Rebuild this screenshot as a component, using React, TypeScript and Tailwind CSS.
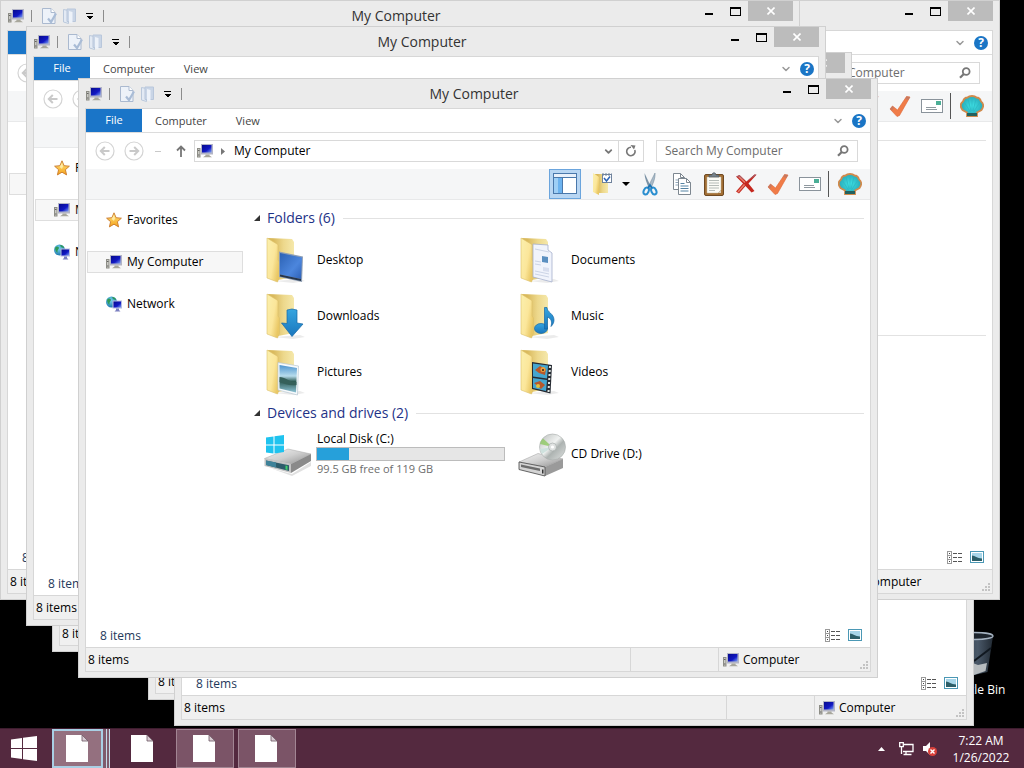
import type { ReactNode } from 'react';
import { ChevronDown } from 'lucide-react';

type IconProps = { className?: string };

function Gradients() {
  return (
    <svg width="0" height="0" className="absolute" aria-hidden="true">
      <defs>
        <linearGradient id="folderFront" x1="0" y1="0" x2="1" y2="0.6">
          <stop offset="0" stopColor="#fbf0ae" />
          <stop offset="0.6" stopColor="#fbe69a" />
          <stop offset="1" stopColor="#e9c764" />
        </linearGradient>
        <linearGradient id="folderBack" x1="0" y1="0" x2="1" y2="0">
          <stop offset="0.2" stopColor="#d9b95c" />
          <stop offset="0.6" stopColor="#edd88c" />
          <stop offset="1" stopColor="#f5e8ab" />
        </linearGradient>
        <linearGradient id="screen" x1="0" y1="0" x2="1" y2="1">
          <stop offset="0" stopColor="#070b8c" />
          <stop offset="0.6" stopColor="#1118c4" />
          <stop offset="1" stopColor="#7fa4f5" />
        </linearGradient>
        <linearGradient id="desktopBlue" x1="0" y1="0" x2="1" y2="1">
          <stop offset="0" stopColor="#2c62b4" />
          <stop offset="0.6" stopColor="#4c86dd" />
          <stop offset="1" stopColor="#2d60b6" />
        </linearGradient>
        <linearGradient id="arrowBlue" x1="0" y1="0" x2="0" y2="1">
          <stop offset="0" stopColor="#35a5e0" />
          <stop offset="1" stopColor="#1a76bd" />
        </linearGradient>
        <linearGradient id="photo" x1="0" y1="0" x2="0" y2="1">
          <stop offset="0" stopColor="#4b93cf" />
          <stop offset="0.4" stopColor="#b7dcec" />
          <stop offset="0.6" stopColor="#2f5c55" />
          <stop offset="1" stopColor="#8cc3d6" />
        </linearGradient>
        <linearGradient id="metal" x1="0" y1="0" x2="1" y2="1">
          <stop offset="0" stopColor="#f3f3f3" />
          <stop offset="0.5" stopColor="#cfcfcf" />
          <stop offset="1" stopColor="#8f8f8f" />
        </linearGradient>
        <linearGradient id="disc" x1="0" y1="0" x2="1" y2="1">
          <stop offset="0" stopColor="#b9bdbb" />
          <stop offset="0.45" stopColor="#f0f2f1" />
          <stop offset="0.6" stopColor="#adb3b1" />
          <stop offset="1" stopColor="#dfe2e1" />
        </linearGradient>
        <linearGradient id="star" x1="0" y1="0" x2="0" y2="1">
          <stop offset="0" stopColor="#ffe680" />
          <stop offset="1" stopColor="#f5a21b" />
        </linearGradient>
        <radialGradient id="globe" cx="0.4" cy="0.35" r="0.7">
          <stop offset="0" stopColor="#7ad6f2" />
          <stop offset="1" stopColor="#1470a8" />
        </radialGradient>
        <radialGradient id="shell" cx="0.5" cy="0.5" r="0.6">
          <stop offset="0" stopColor="#3fe3e6" />
          <stop offset="1" stopColor="#249fb0" />
        </radialGradient>
        <linearGradient id="glass" x1="0" y1="0" x2="1" y2="0">
          <stop offset="0" stopColor="#3a4654" />
          <stop offset="0.6" stopColor="#56677a" />
          <stop offset="1" stopColor="#28323d" />
        </linearGradient>
      </defs>
    </svg>
  );
}

function ComputerIcon({ className = 'size-4' }: IconProps) {
  return (
    <svg viewBox="0 0 16 16" className={`${className} shrink-0`} aria-hidden="true">
      <rect x="0.5" y="5.5" width="2.5" height="8.5" fill="#c9c9c4" stroke="#8d8d86" />
      <path d="M1.2 7.5h1.200M1.200 12h1.200" stroke="#4d4d4d" />
      <rect x="4" y="1" width="12" height="10.500" fill="#b3b5c6" />
      <rect x="5" y="2" width="9.500" height="7.500" fill="url(#screen)" />
      <path d="M8.500 11.500h4v1l2.500 1.800H6l2.500-1.800z" fill="#a8a79c" />
    </svg>
  );
}

function StarIcon() {
  return (
    <svg viewBox="0 0 16 16" className="size-4 shrink-0" aria-hidden="true">
      <path d="M8 .8l2.100 4.900 5.300.500-4 3.500 1.200 5.200L8 12.200l-4.600 2.700 1.200-5.200-4-3.500 5.300-.500z" fill="url(#star)" stroke="#c9792a" strokeWidth="0.9" />
      <path d="M8 3l1 3.500L8 9 5.500 7z" fill="#fff3b8" opacity="0.8" />
    </svg>
  );
}

function NetworkIcon() {
  return (
    <svg viewBox="0 0 16 16" className="size-4 shrink-0" aria-hidden="true">
      <circle cx="5.500" cy="6" r="5.500" fill="url(#globe)" />
      <path d="M1 4c2-3 4-1 4 0S3 6 3.500 8 1 7 1 4zM6 1c3 0 4 2 4 3L7 3z" fill="#2f9a57" />
      <rect x="6.500" y="4.500" width="9.500" height="8" fill="#b7bce0" />
      <rect x="7.500" y="5.500" width="7.500" height="6" fill="url(#screen)" />
      <path d="M10 12.500h3v1.500l1.500 1.500h-6L10 14z" fill="#7a7fc0" />
    </svg>
  );
}

function PropertiesIcon() {
  return (
    <svg viewBox="0 0 16 16" className="size-4 shrink-0" aria-hidden="true">
      <path d="M1.500.500h8.500l4 4v11H1.500z" fill="#edf2f9" stroke="#aab9cf" />
      <path d="M10 .500v4h4" fill="#fff" stroke="#aab9cf" />
      <path d="M7 10.500l3 3.500 5-8.500" fill="none" stroke="#a9bcd6" strokeWidth="2.200" />
    </svg>
  );
}

function NewFolderIcon() {
  return (
    <svg viewBox="0 0 16 16" className="size-4 shrink-0" aria-hidden="true">
      <path d="M1.500 1.500l5 1v13l-5-1.500z" fill="#e3eaf4" stroke="#bac8db" />
      <path d="M5 1h8.500v12.500H5z" fill="#c9d5e6" stroke="#b9c7db" />
      <path d="M7 3l3.500 1v11.500L7 14.500z" fill="#edf2f9" />
    </svg>
  );
}

function TinyCaret() {
  return (
    <svg viewBox="0 0 8 8" className="size-2" shapeRendering="crispEdges" aria-hidden="true">
      <path d="M1 1h7v1H1zM1 4h7L4.500 7.500z" fill="#000" />
    </svg>
  );
}

function HelpIcon() {
  return (
    <span className="flex size-[14px] items-center justify-center rounded-full bg-[#1a75c5] text-[12px] leading-[14px] font-bold text-white">?</span>
  );
}

function SearchIcon() {
  return (
    <svg viewBox="0 0 12 12" className="size-3" aria-hidden="true">
      <circle cx="7.200" cy="4.500" r="3.400" fill="none" stroke="#777" strokeWidth="1.800" />
      <path d="M4.800 7L1 10.800" stroke="#777" strokeWidth="2.200" />
    </svg>
  );
}

function NavArrow({ flip }: { flip?: boolean }) {
  return (
    <svg viewBox="0 0 20 20" className={flip ? 'size-5 -scale-x-100' : 'size-5'} aria-hidden="true">
      <circle cx="10" cy="10" r="9" fill="#fff" stroke="#d4d4d4" strokeWidth="1.200" />
      <path d="M14.500 10H6M9.800 6L5.800 10l4 4" fill="none" stroke="#c9c9c9" strokeWidth="2" />
    </svg>
  );
}

function PaneIcon() {
  return (
    <svg viewBox="0 0 24 22" className="h-[22px] w-6" aria-hidden="true">
      <rect x="0.500" y="0.500" width="23" height="20" fill="#fff" stroke="#4a78ab" />
      <path d="M1 1h22v3H1z" fill="#e8f0fa" />
      <path d="M0 4.500h24M9.500 5v16" stroke="#4a78ab" />
      <path d="M1 5h8v15H1z" fill="#6db3ef" />
      <path d="M1 5h4v15H1z" fill="#b5dbfa" opacity="0.7" />
    </svg>
  );
}

function FolderCheckIcon() {
  return (
    <svg viewBox="0 0 22 24" className="h-6 w-[22px]" aria-hidden="true">
      <path d="M4 2h13v19H6z" fill="url(#folderBack)" />
      <path d="M2 1l6 4v18l-6-3z" fill="url(#folderFront)" />
      <rect x="11.500" y="2.500" width="9" height="8" fill="#fff" stroke="#70839c" />
      <path d="M11 2.500h10" stroke="#70839c" strokeDasharray="2 1" strokeWidth="2" />
      <path d="M13 6l2.500 3L19 4.500" fill="none" stroke="#2c63b5" strokeWidth="1.500" />
    </svg>
  );
}

function ScissorsIcon() {
  return (
    <svg viewBox="0 0 16 24" className="h-6 w-4" aria-hidden="true">
      <path d="M2.500 1l7 15-2 1.500C5 12 2.500 6 2.500 1z" fill="#7b92a5" />
      <path d="M13 1L6 15l2.500 2C11 12 13.500 6 13 1z" fill="#a9bac8" stroke="#6c8496" strokeWidth="0.500" />
      <ellipse cx="4.200" cy="19" rx="2.400" ry="3.600" transform="rotate(25 4.200 19)" fill="none" stroke="#2b8fd0" strokeWidth="2" />
      <ellipse cx="11.800" cy="19" rx="2.400" ry="3.600" transform="rotate(-25 11.800 19)" fill="none" stroke="#2b8fd0" strokeWidth="2" />
      <path d="M6 16l2-3 2 3" fill="none" stroke="#1b73b3" strokeWidth="1.800" />
    </svg>
  );
}

function CopyIcon() {
  return (
    <svg viewBox="0 0 20 24" className="h-6 w-5" aria-hidden="true">
      <path d="M1.500 1.500h7l4 4v12h-11z" fill="#fff" stroke="#7d8790" />
      <path d="M8.500 1.500v4h4" fill="none" stroke="#7d8790" />
      <path d="M3.500 8h4M3.500 10.500h4M3.500 13h4" stroke="#8fa6ba" />
      <path d="M6.500 6.500h8l4 4v12h-12z" fill="#fff" stroke="#7d8790" />
      <path d="M14.500 6.500v4h4" fill="none" stroke="#7d8790" />
      <path d="M8.500 11.500h4M8.500 14h8M8.500 16.500h8M8.500 19h8" stroke="#5583a3" />
    </svg>
  );
}

function ClipboardIcon() {
  return (
    <svg viewBox="0 0 20 24" className="h-6 w-5" aria-hidden="true">
      <rect x="0.500" y="2.500" width="19" height="21" rx="1.500" fill="#a36f35" stroke="#6f4a22" />
      <path d="M3 5h14v13l-3 3H3z" fill="#fbfbf6" stroke="#c7bda6" strokeWidth="0.500" />
      <path d="M5 8.500h10M5 11h10M5 13.500h10M5 16h10M5 18.500h6" stroke="#b6bcb8" />
      <path d="M5 5V3h3c0-3 4-3 4 0h3v2z" fill="#77828a" stroke="#4d565d" strokeWidth="0.700" />
      <path d="M17 18v3h-3z" fill="#d8d0bc" />
    </svg>
  );
}

function DeleteIcon() {
  return (
    <svg viewBox="0 0 22 20" className="h-5 w-[22px]" aria-hidden="true">
      <path d="M1 2.500L4.500 1l7 6.500L19.500.500l2 .300-8 8.700 6 7.500-3 1.500-6-6.500L4 19.500 1 17.500 8 9.500z" fill="#c5281f" />
      <path d="M21.500.800L11.500 7.500 19.500.500zM1.500 2.500L4.500 1l5 5z" fill="#a8606a" />
      <path d="M3 18l6.500-7.500M4 3l6 5.500" stroke="#e8806f" strokeWidth="1.500" />
    </svg>
  );
}

function CheckIcon() {
  return (
    <svg viewBox="0 0 22 22" className="size-[22px]" aria-hidden="true">
      <path d="M1 14L3.500 11l5 4L17.500 1.500l3.500.500L10.500 20.500 8 21.500z" fill="#f07c48" stroke="#dd6636" strokeWidth="0.600" />
      <path d="M17.500 1.500l3.500.500-1.500 3-3.500-1zM1 14L3.500 11l1.500 1.500-2 3z" fill="#b9776a" opacity="0.7" />
    </svg>
  );
}

function MailIcon() {
  return (
    <svg viewBox="0 0 22 14" className="h-[14px] w-[22px]" shapeRendering="crispEdges" aria-hidden="true">
      <rect x="0.500" y="0.500" width="21" height="13" fill="#fff" stroke="#8a939b" />
      <rect x="15" y="2" width="5" height="4" fill="#4bae96" />
      <path d="M5 8.500h10M5 10.500h11" stroke="#8f989f" />
    </svg>
  );
}

function ShellIcon() {
  return (
    <svg viewBox="0 0 24 22" className="h-[22px] w-6" aria-hidden="true">
      <path d="M7 17.500L2.500 15C-.5 11 1 8 3 6.500 4 3 6 2.500 7.500 2.500 9.500.500 14.500.500 16.500 2.500 18 2.500 20 3 21 6.500c2 1.500 3.500 4.500.500 8.500L17 17.500V21H7z" fill="url(#shell)" stroke="#d08a4c" strokeWidth="1.800" />
      <path d="M10.500 17L4 7M11 16L8 4M12 16V3M13 16l3-12M13.500 17L20 7" stroke="#2bb6c2" strokeWidth="0.700" />
      <path d="M7 18h10v3H7z" fill="#23615e" />
    </svg>
  );
}

function DetailsViewIcon() {
  return (
    <svg viewBox="0 0 15 13" className="h-[13px] w-[15px]" shapeRendering="crispEdges" aria-hidden="true">
      <path d="M.5.500h4v4h-4zM.5 4.500h4v4h-4zM.5 8.500h4v4h-4z" fill="#fff" stroke="#9a9a9a" />
      <path d="M2 2h1v1H2zM2 6h1v1H2zM2 10h1v1H2z" fill="#444" />
      <path d="M6 2.500h4M11 2.500h4M6 6.500h4M11 6.500h4M6 10.500h4M11 10.500h4" stroke="#555" />
    </svg>
  );
}

function LargeViewIcon() {
  return (
    <svg viewBox="0 0 14 12" className="h-3 w-[14px]" aria-hidden="true">
      <rect x="0.500" y="0.500" width="13" height="11" fill="#fff" stroke="#4b98b5" />
      <rect x="2" y="2" width="10" height="8" fill="#a7d5e8" />
      <path d="M2 4.500c3 0 5 3 10 3V10H2z" fill="#2c5e68" />
    </svg>
  );
}

function FolderIcon({ children }: { children: ReactNode }) {
  return (
    <svg viewBox="0 0 48 48" className="size-12 shrink-0 overflow-visible" aria-hidden="true">
      <path d="M12 45l26-2 5 2-12 2z" fill="#000" opacity="0.08" />
      <path d="M6 2l24 1 2 3v35l-16 3z" fill="url(#folderBack)" />
      <path d="M5 2l10 6c1 .500 1 1 1 2v14l1.500 2v15l-2 5L5 42z" fill="url(#folderFront)" stroke="#dcbf68" strokeWidth="0.600" />
      {children}
    </svg>
  );
}

const folders = [
  {
    name: 'Desktop',
    art: (
      <>
        <path d="M17 15.500l24 5-1 25.500-23-5z" fill="#8f9fb5" />
        <path d="M18 17l22 4.500-1 21.500-21-4.500z" fill="url(#desktopBlue)" />
        <path d="M18 38.500L39 43v2l-21-4.500z" fill="#26364c" />
      </>
    ),
  },
  {
    name: 'Documents',
    art: (
      <>
        <path d="M17 8l15 1v5l4 3v29l-19-5z" fill="#f1f4fc" stroke="#a5aecb" strokeWidth="0.800" />
        <path d="M19 13l14 3M19 25l6 1M19 28l6 1M19 35l14 3M19 38l14 3" stroke="#ccd4e6" />
        <path d="M26 20l6 1v6l-6-1z" fill="#5b8fc0" />
        <path d="M27 31l6 1v4l-6-1z" fill="#d8deee" />
      </>
    ),
  },
  {
    name: 'Downloads',
    art: <path d="M25 18l5-1 5 1v13l6 1-11 12.500L19.500 31l5.500.500z" fill="url(#arrowBlue)" stroke="#1667a5" strokeWidth="0.700" />,
  },
  {
    name: 'Music',
    art: (
      <>
        <ellipse cx="25" cy="36.500" rx="6.500" ry="5" fill="url(#arrowBlue)" stroke="#1667a5" strokeWidth="0.700" />
        <path d="M28.500 37V15.500h2.500c0 5 7 6 7 12.500 0 3-1.500 5-3 6.500 1-4 1-7.500-3.500-9.500v12z" fill="url(#arrowBlue)" stroke="#1667a5" strokeWidth="0.700" />
      </>
    ),
  },
  {
    name: 'Pictures',
    art: (
      <>
        <path d="M16 14.500l20.500 3.500-1 29L16 42z" fill="#f7fafc" stroke="#b8c7d2" strokeWidth="0.700" />
        <path d="M17.500 17l17.500 3-1 24.500-16.500-4z" fill="url(#photo)" />
        <path d="M17.500 29c5 0 10 5 17 5v3c-7 1-12-1-17-3z" fill="#35605a" />
      </>
    ),
  },
  {
    name: 'Videos',
    art: (
      <>
        <path d="M16 14l20 3-1.500 28.500L16 41z" fill="#262b33" />
        <path d="M17 15.500l15 2-1 13-14-2zM17 30l14 2-1 11-13-3z" fill="#45a6cf" />
        <path d="M19 22l5-4 6 3-1 6-6-2zM18 35l6-2 5 4-4 4z" fill="#b8582b" />
        <circle cx="27" cy="21.500" r="2.500" fill="#e9a23d" />
        <circle cx="27" cy="22" r="1" fill="#3a1f1a" />
        <circle cx="22" cy="38" r="2" fill="#e2c13e" />
        <path d="M34 18l-1.500 26" stroke="#dfe6e3" strokeWidth="2" strokeDasharray="2 2" />
      </>
    ),
  },
];

function WindowsDriveIcon() {
  return (
    <svg viewBox="0 0 48 48" className="size-12 shrink-0 overflow-visible" aria-hidden="true">
      <path d="M8 38l22 6 19-12v4L30 46z" fill="#000" opacity="0.12" />
      <path d="M2.500 28.500L26 19l23 5-20 10z" fill="url(#metal)" stroke="#a9a9a9" strokeWidth="0.500" />
      <path d="M49 24v7L29 43v-9z" fill="#8a8a8a" />
      <path d="M2.500 28.500L29 34v9L2.500 36z" fill="#c3c3c3" />
      <path d="M4 30.500l23 4.800v5.700L4 35z" fill="#2e5c6b" />
      <path d="M4 30.500l10 2v5L4 35z" fill="#3e8299" />
      <path d="M23.500 35.500l2 .500v4l-2-.500z" fill="#3fd06a" />
      <path d="M4 7.500l7.500-1v8H4zM12.500 6.300L22 5v9.500h-9.500zM4 15.500h7.500v8l-7.500-1zM12.500 15.500H22V22l-9.500 1.500z" fill="#1fc3ef" />
    </svg>
  );
}

function CdDriveIcon() {
  return (
    <svg viewBox="0 0 48 48" className="size-12 shrink-0 overflow-visible" aria-hidden="true">
      <path d="M3 32l19-8.500 25 5.500-18 8z" fill="url(#metal)" stroke="#9b9b9b" strokeWidth="0.500" />
      <path d="M47 29v9L29 46v-9z" fill="#9a9a9a" />
      <path d="M3 32l26 5v9L3 39.500z" fill="#d4d4d4" stroke="#555" strokeWidth="0.900" />
      <path d="M5 34.500l19 4v2.500L5 37z" fill="#6d6d6d" />
      <path d="M26 39.500h1.500v4H26z" fill="#333" />
      <circle cx="36.500" cy="17" r="13" fill="url(#disc)" stroke="#a7adab" strokeWidth="0.600" />
      <path d="M36.500 17L24 14c.5-2 1.500-4 3-5.500z" fill="#8ec863" opacity="0.8" />
      <path d="M36.500 17L26 24c-1-2-1.800-3.500-2-5z" fill="#cfe2de" />
      <circle cx="36.500" cy="17" r="4" fill="#dfe2e1" stroke="#9ea4a2" strokeWidth="0.600" />
      <circle cx="36.500" cy="17" r="1.600" fill="#fff" />
    </svg>
  );
}

function RecycleBinIcon() {
  return (
    <svg viewBox="0 0 48 48" className="size-12" aria-hidden="true">
      <path d="M5 6h38l-5.500 36-13.500 3-13.500-3z" fill="url(#glass)" opacity="0.85" />
      <ellipse cx="24" cy="6" rx="19" ry="3.500" fill="#1d242c" stroke="#a5b2c0" strokeWidth="1.300" />
      <path d="M12 34l8-2 8 3 9-2-1.500 8-11.500 4-11-3.500z" fill="#b7bcbf" />
      <path d="M41 18L24 31" stroke="#111820" strokeWidth="2" />
    </svg>
  );
}

function PageIcon() {
  return (
    <svg viewBox="0 0 22 27" className="h-[27px] w-[22px]" aria-hidden="true">
      <path d="M0 0h16l6 6v21H0z" fill="#fff" />
      <path d="M16 0v6h6z" fill="#d9ccd3" stroke="#6b5562" strokeWidth="0.800" />
    </svg>
  );
}

function SectionHeader({ children }: { children?: ReactNode }) {
  return (
    <h2 className="flex h-6 items-center pr-[6px] text-[14px] leading-6 text-[#1e3287]">
      <svg viewBox="0 0 6 6" className="mr-[7px] size-[6px]" aria-hidden="true"><path d="M6 0v6H0z" fill="#333" /></svg>
      {children}
      <span className="ml-2 h-px flex-1 bg-[#e2e2e2]" />
    </h2>
  );
}

function TitleBar({ title }: { title?: string }) {
  return (
    <header className="flex h-[29px] shrink-0 items-start">
      <div className="flex h-[29px] w-[120px] items-center pl-px">
        <ComputerIcon />
        <span className="ml-[7px] h-3 w-px bg-[#8c8c8c]" />
        <button aria-label="Properties" className="ml-[9px]"><PropertiesIcon /></button>
        <button aria-label="New folder" className="ml-[5px]"><NewFolderIcon /></button>
        <button aria-label="Customize toolbar" className="ml-[7px]"><TinyCaret /></button>
        <span className="ml-[10px] h-3 w-px bg-[#8c8c8c]" />
      </div>
      <h1 className="flex-1 text-center text-[14px] leading-[29px] text-[#333]">{title}</h1>
      <div className="flex w-32 justify-end">
        <button aria-label="Minimize" className="flex h-5 w-[26px] items-center justify-center">
          <span className="mt-[6px] h-[2px] w-2 bg-black" />
        </button>
        <button aria-label="Maximize" className="flex h-5 w-[26px] items-center justify-center">
          <span className="h-[9px] w-[11px] border border-t-2 border-black" />
        </button>
        <button aria-label="Close" className="flex h-5 w-[45px] items-center justify-center bg-[#bcbcbc]">
          <svg viewBox="0 0 8 8" className="size-2" aria-hidden="true"><path d="M.5.500l7 7M7.500.500l-7 7" stroke="#fff" strokeWidth="1.600" /></svg>
        </button>
      </div>
    </header>
  );
}

function Ribbon({ covered }: { covered?: boolean }) {
  return (
    <div className="flex h-6 shrink-0 items-center border-b border-[#dcdcdc] text-[11px] text-[#444]">
      {!covered && (
        <>
          <button className="h-[23px] w-14 self-start bg-[#1a75c8] text-white">File</button>
          <button className="ml-[13px] h-6 pt-[2px]">Computer</button>
          <button className="ml-[29px] h-6 pt-[2px]">View</button>
        </>
      )}
      <span className="flex-1" />
      <button aria-label="Collapse ribbon"><ChevronDown size={12} strokeWidth={3} color="#999" /></button>
      <button aria-label="Help" className="mr-1 ml-2"><HelpIcon /></button>
    </div>
  );
}

function AddressRow({ path }: { path?: string }) {
  return (
    <div className="flex h-9 shrink-0 items-center pr-3 pl-[9px]">
      <button aria-label="Back"><NavArrow /></button>
      <button aria-label="Forward" className="ml-[9px]"><NavArrow flip /></button>
      <span className="ml-[11px] h-px w-[6px] bg-[#c9c9c9]" />
      <button aria-label="Up" className="ml-[15px]">
        <svg viewBox="0 0 10 12" className="h-3 w-[10px]" aria-hidden="true"><path d="M5 12V1.500M1 5.500l4-4 4 4" fill="none" stroke="#777" strokeWidth="1.800" /></svg>
      </button>
      <div className="ml-2 flex h-[22px] flex-1 items-center border border-[#d9d9d9] pl-[2px]">
        <ComputerIcon />
        <svg viewBox="0 0 4 7" className="ml-2 h-[7px] w-1" aria-hidden="true"><path d="M0 0l4 3.500L0 7z" fill="#777" /></svg>
        <span className="ml-[9px] flex-1 leading-5">{path}</span>
        <button aria-label="Recent locations" className="px-1"><ChevronDown size={11} strokeWidth={4} color="#777" /></button>
        <button aria-label="Refresh" className="flex h-5 w-[25px] items-center justify-center border-l border-[#d9d9d9]">
          <svg viewBox="0 0 12 12" className="size-3" aria-hidden="true">
            <path d="M9.800 5A4.200 4.200 0 1 1 6 2.300" fill="none" stroke="#777" strokeWidth="1.600" />
            <path d="M5.500 0l5 .500-1.500 4z" fill="#777" />
          </svg>
        </button>
      </div>
      <label className="ml-3 flex h-[22px] w-[202px] items-center border border-[#d9d9d9] pr-2 pl-2">
        <input type="search" aria-label="Search My Computer" placeholder="Search My Computer" className="min-w-0 flex-1 leading-5 outline-none placeholder:text-[#6d6d6d]" />
        <SearchIcon />
      </label>
    </div>
  );
}

const tools = [
  { label: 'Cut', icon: <ScissorsIcon /> },
  { label: 'Copy', icon: <CopyIcon /> },
  { label: 'Paste', icon: <ClipboardIcon /> },
  { label: 'Delete', icon: <DeleteIcon /> },
  { label: 'Confirm', icon: <CheckIcon /> },
  { label: 'Mail', icon: <MailIcon /> },
];

function Toolbar() {
  return (
    <div className="flex h-[31px] shrink-0 items-center justify-end border-b border-[#e8e9ea] bg-[#f5f6f7] pr-1">
      <button aria-label="Navigation pane" className="mr-[5px] flex h-[30px] w-8 items-center justify-center border border-[#6ba5dd] bg-[#b8d6f3]"><PaneIcon /></button>
      <button aria-label="Organize" className="flex w-8 justify-center"><FolderCheckIcon /></button>
      <button aria-label="Organize options" className="flex w-4 justify-center">
        <svg viewBox="0 0 8 4" className="h-1 w-2" aria-hidden="true"><path d="M0 0h8L4 4z" fill="#000" /></svg>
      </button>
      {tools.map((tool) => (
        <button key={tool.label} aria-label={tool.label} className="flex w-8 justify-center">{tool.icon}</button>
      ))}
      <span className="ml-[2px] h-[26px] w-px bg-[#555]" />
      <button aria-label="Classic Shell settings" className="ml-[5px] flex w-8 justify-center"><ShellIcon /></button>
    </div>
  );
}

const places = [
  { name: 'Favorites', icon: <StarIcon /> },
  { name: 'My Computer', icon: <ComputerIcon />, selected: true },
  { name: 'Network', icon: <NetworkIcon /> },
];

function Sidebar({ covered }: { covered?: boolean }) {
  return (
    <nav className="flex w-[157px] shrink-0 flex-col gap-5 pt-[9px] pl-px">
      {places.map((place) => (
        <a
          key={place.name}
          href="#"
          className={`flex h-[22px] items-center gap-[5px] border pl-[18px] ${place.selected ? 'border-[#dedede] bg-[#f7f7f7]' : 'border-transparent'}`}
        >
          {place.icon}
          {!covered && place.name}
        </a>
      ))}
    </nav>
  );
}

function FolderList() {
  return (
    <ul className="ml-2 grid grid-cols-[repeat(2,254px)] gap-y-2">
      {folders.map((folder) => (
        <li key={folder.name} className="flex h-12 items-center gap-[7px]">
          <FolderIcon>{folder.art}</FolderIcon>
          {folder.name}
        </li>
      ))}
    </ul>
  );
}

function DriveList() {
  return (
    <ul className="ml-2 grid grid-cols-[repeat(2,254px)] pt-[5px]">
      <li className="flex h-12 items-center gap-[6px]">
        <WindowsDriveIcon />
        <div className="w-[189px]">
          <p className="pl-px leading-4">Local Disk (C:)</p>
          <div role="progressbar" aria-label="Used space" aria-valuenow={17} className="h-[14px] border border-[#bcbcbc] bg-[#e6e6e6]">
            <div className="h-full bg-[#26a0da]" style={{ width: '17%' }} />
          </div>
          <p className="pl-px text-[11px] leading-4 text-[#6d6d6d]">99.5 GB free of 119 GB</p>
        </div>
      </li>
      <li className="flex h-12 items-center gap-[7px]">
        <CdDriveIcon />
        CD Drive (D:)
      </li>
    </ul>
  );
}

function Contents({ active }: { active?: boolean }) {
  return (
    <main className="min-w-0 flex-1 pt-[6px] pl-[11px]">
      <SectionHeader>{active && 'Folders (6)'}</SectionHeader>
      <div className="h-[171px] pt-[6px]">{active && <FolderList />}</div>
      <SectionHeader>{active && 'Devices and drives (2)'}</SectionHeader>
      {active && <DriveList />}
    </main>
  );
}

function StatusBar() {
  return (
    <div className="flex h-6 shrink-0 items-stretch border-t border-[#d7d7d7] bg-[#f0f0f0] leading-6">
      <span className="flex-1 pl-[2px]">8 items</span>
      <span className="w-[88px] border-l border-[#d7d7d7]" />
      <span className="flex w-[152px] items-center gap-1 border-l border-[#d7d7d7] pl-1">
        <ComputerIcon />
        Computer
        <svg viewBox="0 0 8 8" className="mr-[2px] mb-[2px] ml-auto size-2 self-end" shapeRendering="crispEdges" aria-hidden="true">
          <path d="M6 0h2v2H6zM3 3h2v2H3zM6 3h2v2H6zM0 6h2v2H0zM3 6h2v2H3zM6 6h2v2H6z" fill="#c3c3c3" />
        </svg>
      </span>
    </div>
  );
}

type ExplorerWindowProps = {
  className: string;
  active?: boolean;
  covered?: boolean; // only the edges of the window show behind the others
};

function ExplorerWindow({ className, active, covered }: ExplorerWindowProps) {
  return (
    <section aria-label="My Computer" className={`absolute flex h-[600px] w-[800px] flex-col border border-[#d0d0d0] bg-[#ebebeb] px-[6px] pb-[5px] ${className}`}>
      <TitleBar title={covered ? undefined : 'My Computer'} />
      <div className="flex min-h-0 flex-1 flex-col border border-[#d7d7d7] bg-white">
        <Ribbon covered={covered} />
        <AddressRow path={active ? 'My Computer' : undefined} />
        <Toolbar />
        <div className="flex min-h-0 flex-1">
          <Sidebar covered={covered} />
          <Contents active={active} />
        </div>
        <div className="flex h-6 shrink-0 items-center gap-2 pr-2 pl-[14px] text-[#1e395b]">
          <span className="flex-1 pt-[2px]">8 items</span>
          <button aria-label="Details view"><DetailsViewIcon /></button>
          <button aria-label="Large icons view"><LargeViewIcon /></button>
        </div>
        <StatusBar />
      </div>
    </section>
  );
}

function Taskbar() {
  return (
    <footer className="absolute inset-x-0 bottom-0 flex h-10 items-stretch border-t border-[#3d1c2e] bg-[#54293f] text-white">
      <button aria-label="Start" className="flex w-12 items-center justify-center">
        <svg viewBox="0 0 26 25" className="h-[25px] w-[26px]" aria-hidden="true">
          <path d="M0 3.500L11 2v10H0zM12 1.800L26 0v12H12zM0 13h11v10L0 21.500zM12 13h14v12l-14-1.800z" fill="#fff" />
        </svg>
      </button>
      <div className="ml-1 flex gap-1">
        <button aria-label="My Computer windows" className="flex w-[58px]">
          <span className="flex h-full w-[51px] items-center justify-center border-2 border-[#a9cfe4] bg-[#94707f] pr-[2px]"><PageIcon /></span>
          <span className="h-full w-1 border-r border-[#c5dbe8] bg-[#7f5a6c]" />
          <span className="h-full w-[3px] border-r border-[#c5dbe8] bg-[#7f5a6c]" />
        </button>
        <button aria-label="Document" className="flex w-[58px] items-center justify-center pr-[2px]"><PageIcon /></button>
        <button aria-label="Document" className="flex w-[58px] items-center justify-center border border-[#a28593] bg-[#7b5467] pr-[2px]"><PageIcon /></button>
        <button aria-label="Document" className="flex w-[58px] items-center justify-center border border-[#a28593] bg-[#7b5467] pr-[2px]"><PageIcon /></button>
      </div>
      <div className="ml-auto flex items-center">
        <button aria-label="Show hidden icons">
          <svg viewBox="0 0 7 4" className="h-1 w-[7px]" aria-hidden="true"><path d="M0 4l3.500-4L7 4z" fill="#fff" /></svg>
        </button>
        <button aria-label="Network status" className="ml-[14px]">
          <svg viewBox="0 0 15 14" className="h-[14px] w-[15px]" aria-hidden="true">
            <path d="M5 2.500h9v7H4M7 9.500v3M4.500 12.500h8" fill="none" stroke="#fff" strokeWidth="1.300" />
            <path d="M.7.700h3.600v4H.7zM2.500 5v7" fill="none" stroke="#fff" strokeWidth="1.300" />
          </svg>
        </button>
        <button aria-label="Sound muted" className="ml-2">
          <svg viewBox="0 0 16 16" className="size-4" aria-hidden="true">
            <path d="M1 5h3l4-4v13l-4-4H1z" fill="#fff" />
            <circle cx="10.500" cy="10.500" r="4.500" fill="#d9403a" />
            <path d="M8.500 8.500l4 4m0-4l-4 4" stroke="#fff" strokeWidth="1.400" />
          </svg>
        </button>
        <div className="mr-2 ml-2 w-[70px] text-center leading-[17px]">
          <p>7:22 AM</p>
          <p>1/26/2022</p>
        </div>
      </div>
    </footer>
  );
}

export default function App() {
  return (
    <div className="relative h-screen overflow-hidden bg-black font-['Open_Sans','Noto_Sans',sans-serif] text-[12px] text-black">
      <Gradients />
      <div className="absolute top-[630px] left-[934px] flex w-20 flex-col items-center text-white">
        <RecycleBinIcon />
        <span className="mt-1 leading-4">Recycle Bin</span>
      </div>
      <ExplorerWindow className="top-[100px] left-[148px]" covered />
      <ExplorerWindow className="top-[126px] left-[174px]" covered />
      <ExplorerWindow className="top-0 left-[200px]" covered />
      <ExplorerWindow className="top-[52px] left-[52px]" covered />
      <ExplorerWindow className="top-0 left-0" />
      <ExplorerWindow className="top-[26px] left-[26px]" />
      <ExplorerWindow className="top-[78px] left-[78px]" active />
      <Taskbar />
    </div>
  );
}
